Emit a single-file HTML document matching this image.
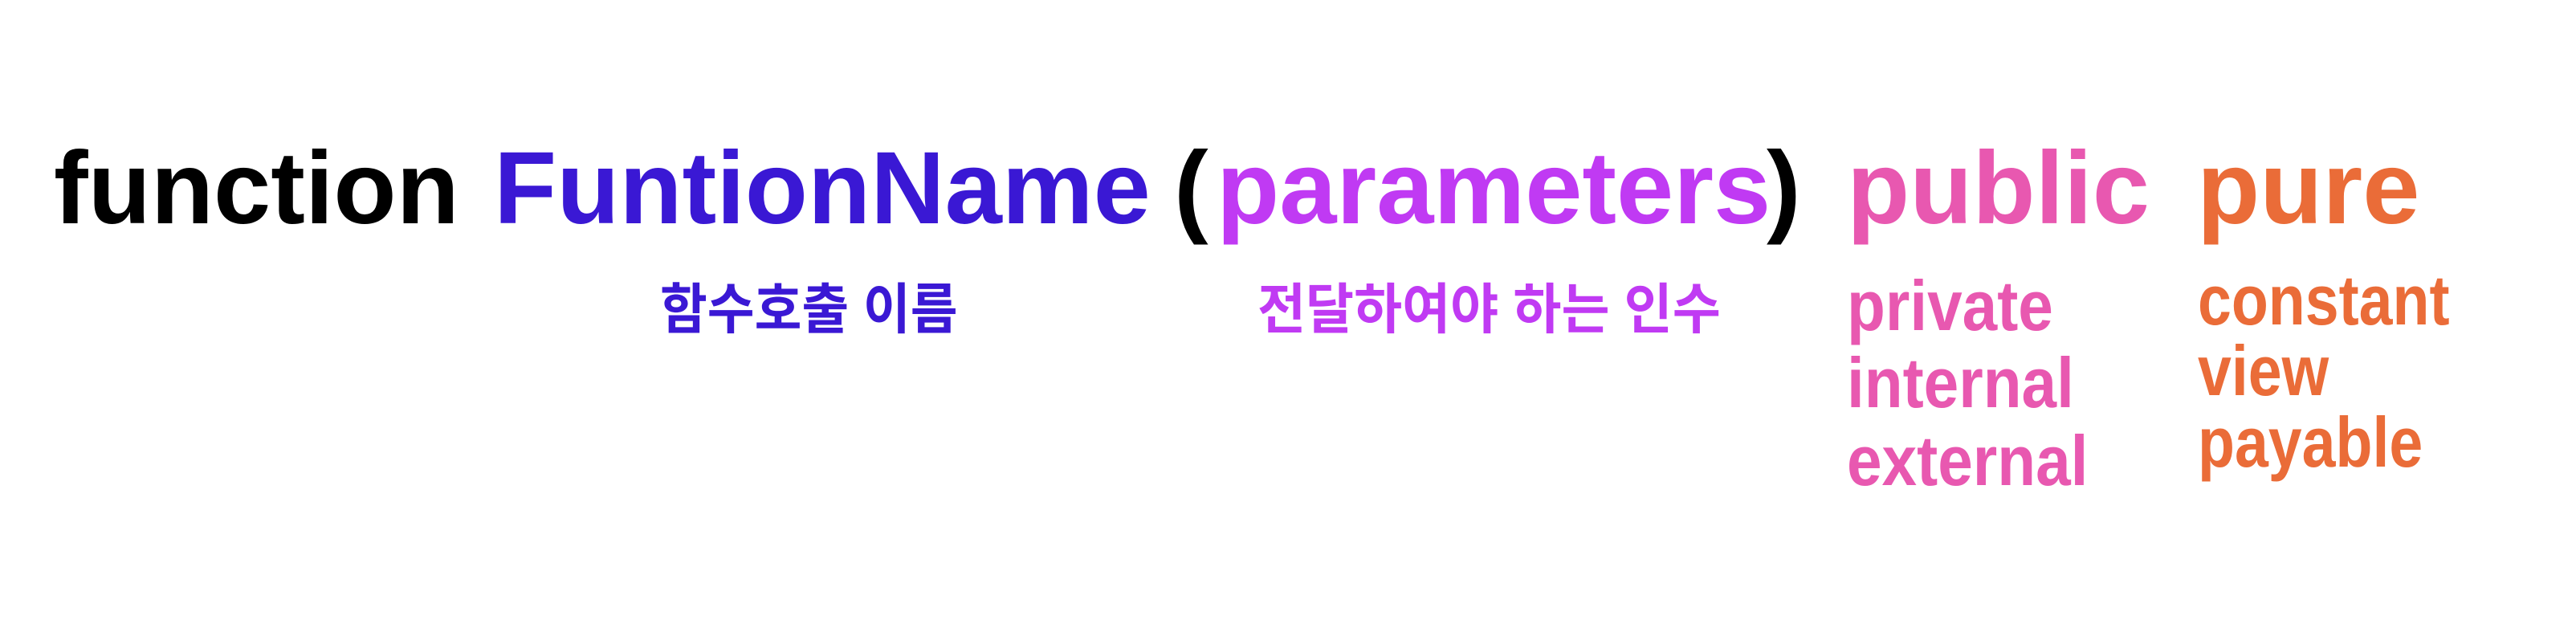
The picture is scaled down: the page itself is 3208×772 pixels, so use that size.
<!DOCTYPE html>
<html><head><meta charset="utf-8"><style>
html,body{margin:0;padding:0;background:#fff;width:3208px;height:772px;overflow:hidden;position:relative}
.t{position:absolute;white-space:nowrap;font-family:"Liberation Sans","Noto Sans CJK KR",sans-serif;font-weight:bold;line-height:1;transform-origin:0 0}
.m{font-size:128px;top:171px}
.k{font-size:68px;top:352px}
.s{font-size:88px;transform:scaleX(0.89)}
.s2{font-size:88px;transform:scaleX(0.855)}
.blue{color:#3a18d4}.pur{color:#c03af3}.pink{color:#e858b0}.or{color:#ea6c38}
</style></head><body>
<div class="t m" style="left:67px;color:#000">function</div>
<div class="t m blue" style="left:615px">FuntionName</div>
<div class="t m" style="left:1462px;color:#000">(</div>
<div class="t m pur" style="left:1515px">parameters</div>
<div class="t m" style="left:2200px;color:#000">)</div>
<div class="t m pink" style="left:2300px">public</div>
<div class="t m or" style="left:2736px">pure</div>

<div class="t k blue" style="left:822px;transform:scaleX(0.94)">함수호출 이름</div>
<div class="t k pur" style="left:1566px;transform:scaleX(0.96)">전달하여야 하는 인수</div>

<div class="t s pink" style="left:2300px;top:337px">private</div>
<div class="t s pink" style="left:2300px;top:433px">internal</div>
<div class="t s pink" style="left:2300px;top:530px">external</div>
<div class="t s2 or" style="left:2737px;top:330px">constant</div>
<div class="t s2 or" style="left:2737px;top:418px">view</div>
<div class="t s2 or" style="left:2737px;top:507px">payable</div>
</body></html>
